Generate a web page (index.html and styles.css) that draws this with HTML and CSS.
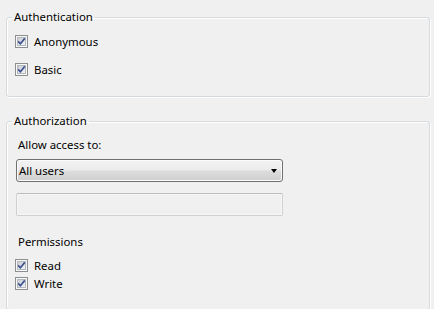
FILE: index.html
```html
<!DOCTYPE html>
<html>
<head>
<meta charset="utf-8">
<link rel="stylesheet" href="styles.css">
</head>
<body>
<fieldset class="group group-auth">
  <legend class="legend">Authentication</legend>
  <div class="check-list check-list-auth">
    <label class="check-row">
      <svg class="check" width="13" height="13" viewBox="0 0 13 13"><defs><linearGradient id="cg1" x1="0" y1="0" x2="1" y2="1"><stop offset="0" stop-color="#c6cbd3"/><stop offset="1" stop-color="#f6f6f6"/></linearGradient></defs><rect x="0.5" y="0.5" width="12" height="12" fill="#f8f8f8" stroke="#8e8f8f"/><rect x="2.5" y="2.5" width="8" height="8" fill="url(#cg1)" stroke="#b4b9bf"/><path d="M3.2 6.4 L5.4 8.8 L9.8 3.4" fill="none" stroke="#3f5290" stroke-width="1.7"/></svg>
      <span class="check-text">Anonymous</span>
    </label>
    <label class="check-row">
      <svg class="check" width="13" height="13" viewBox="0 0 13 13"><rect x="0.5" y="0.5" width="12" height="12" fill="#f8f8f8" stroke="#8e8f8f"/><rect x="2.5" y="2.5" width="8" height="8" fill="url(#cg1)" stroke="#b4b9bf"/><path d="M3.2 6.4 L5.4 8.8 L9.8 3.4" fill="none" stroke="#3f5290" stroke-width="1.7"/></svg>
      <span class="check-text">Basic</span>
    </label>
  </div>
</fieldset>

<fieldset class="group group-authz">
  <legend class="legend">Authorization</legend>
  <div class="field-label">Allow access to:</div>
  <div class="select">
    <span class="select-text">All users</span>
    <span class="select-arrow"></span>
  </div>
  <div class="textbox"></div>
  <div class="field-label perm-label">Permissions</div>
  <div class="check-list check-list-perm">
    <label class="check-row">
      <svg class="check" width="13" height="13" viewBox="0 0 13 13"><rect x="0.5" y="0.5" width="12" height="12" fill="#f8f8f8" stroke="#8e8f8f"/><rect x="2.5" y="2.5" width="8" height="8" fill="url(#cg1)" stroke="#b4b9bf"/><path d="M3.2 6.4 L5.4 8.8 L9.8 3.4" fill="none" stroke="#3f5290" stroke-width="1.7"/></svg>
      <span class="check-text">Read</span>
    </label>
    <label class="check-row">
      <svg class="check" width="13" height="13" viewBox="0 0 13 13"><rect x="0.5" y="0.5" width="12" height="12" fill="#f8f8f8" stroke="#8e8f8f"/><rect x="2.5" y="2.5" width="8" height="8" fill="url(#cg1)" stroke="#b4b9bf"/><path d="M3.2 6.4 L5.4 8.8 L9.8 3.4" fill="none" stroke="#3f5290" stroke-width="1.7"/></svg>
      <span class="check-text">Write</span>
    </label>
  </div>
</fieldset>
</body>
</html>
```

FILE: styles.css
```css
html, body {
  margin: 0;
  padding: 0;
  background: #f0f0f0;
  height: 309px;
  overflow: hidden;
}
body {
  font-family: "Noto Sans", "Open Sans", sans-serif;
  font-size: 11.4px;
  color: #000;
}
.group {
  box-sizing: border-box;
  width: 424px;
  margin: 0 0 0 6px;
  padding: 9px 8px 19px 8px;
  border: 1px solid #d5dadf;
  border-radius: 3px;
  box-shadow: 1px 1px 0 #ffffff, inset 1px 1px 0 #ffffff;
  min-width: 0;
}
.group-auth {
  margin-top: 9px;
}
.group-authz {
  margin-top: 16px;
  padding-top: 8px;
  height: 197px;
}
.legend {
  padding: 0 2px;
  margin-left: -3px;
  line-height: 16px;
  height: 16px;
}
.check-list {
  display: flex;
  flex-direction: column;
}
.check-list-auth {
  gap: 13px;
}
.check-list-perm {
  gap: 3px;
  margin-top: 8px;
}
.check-row {
  display: flex;
  align-items: center;
  height: 15px;
  gap: 6px;
}
.check {
  flex: none;
  display: block;
}
.check-text {
  line-height: 15px;
}
.field-label {
  margin-left: 3px;
  line-height: 16px;
  height: 16px;
}
.select {
  box-sizing: border-box;
  margin: 6px 0 0 1px;
  width: 267px;
  height: 23px;
  border: 1px solid #707070;
  border-radius: 3px;
  background: linear-gradient(#f2f2f2 0%, #ebebeb 48%, #dddddd 52%, #cfcfcf 100%);
  display: flex;
  align-items: center;
  justify-content: space-between;
  padding: 0 4px 0 2px;
  box-shadow: inset 0 0 0 1px #fcfcfc;
}
.select-text {
  line-height: 16px;
}
.select-arrow {
  width: 0;
  height: 0;
  border-left: 3.5px solid transparent;
  border-right: 3.5px solid transparent;
  border-top: 4px solid #000;
  margin-right: 1px;
}
.textbox {
  box-sizing: border-box;
  margin: 11px 0 0 1px;
  width: 267px;
  height: 23px;
  border: 1px solid #d0d0d0;
  border-top-color: #bcbcbc;
  border-radius: 2px;
  background: #f0f0f0;
  box-shadow: inset 0 0 0 1px #f7f7f7;
}
.perm-label {
  margin-top: 18px;
}
```
